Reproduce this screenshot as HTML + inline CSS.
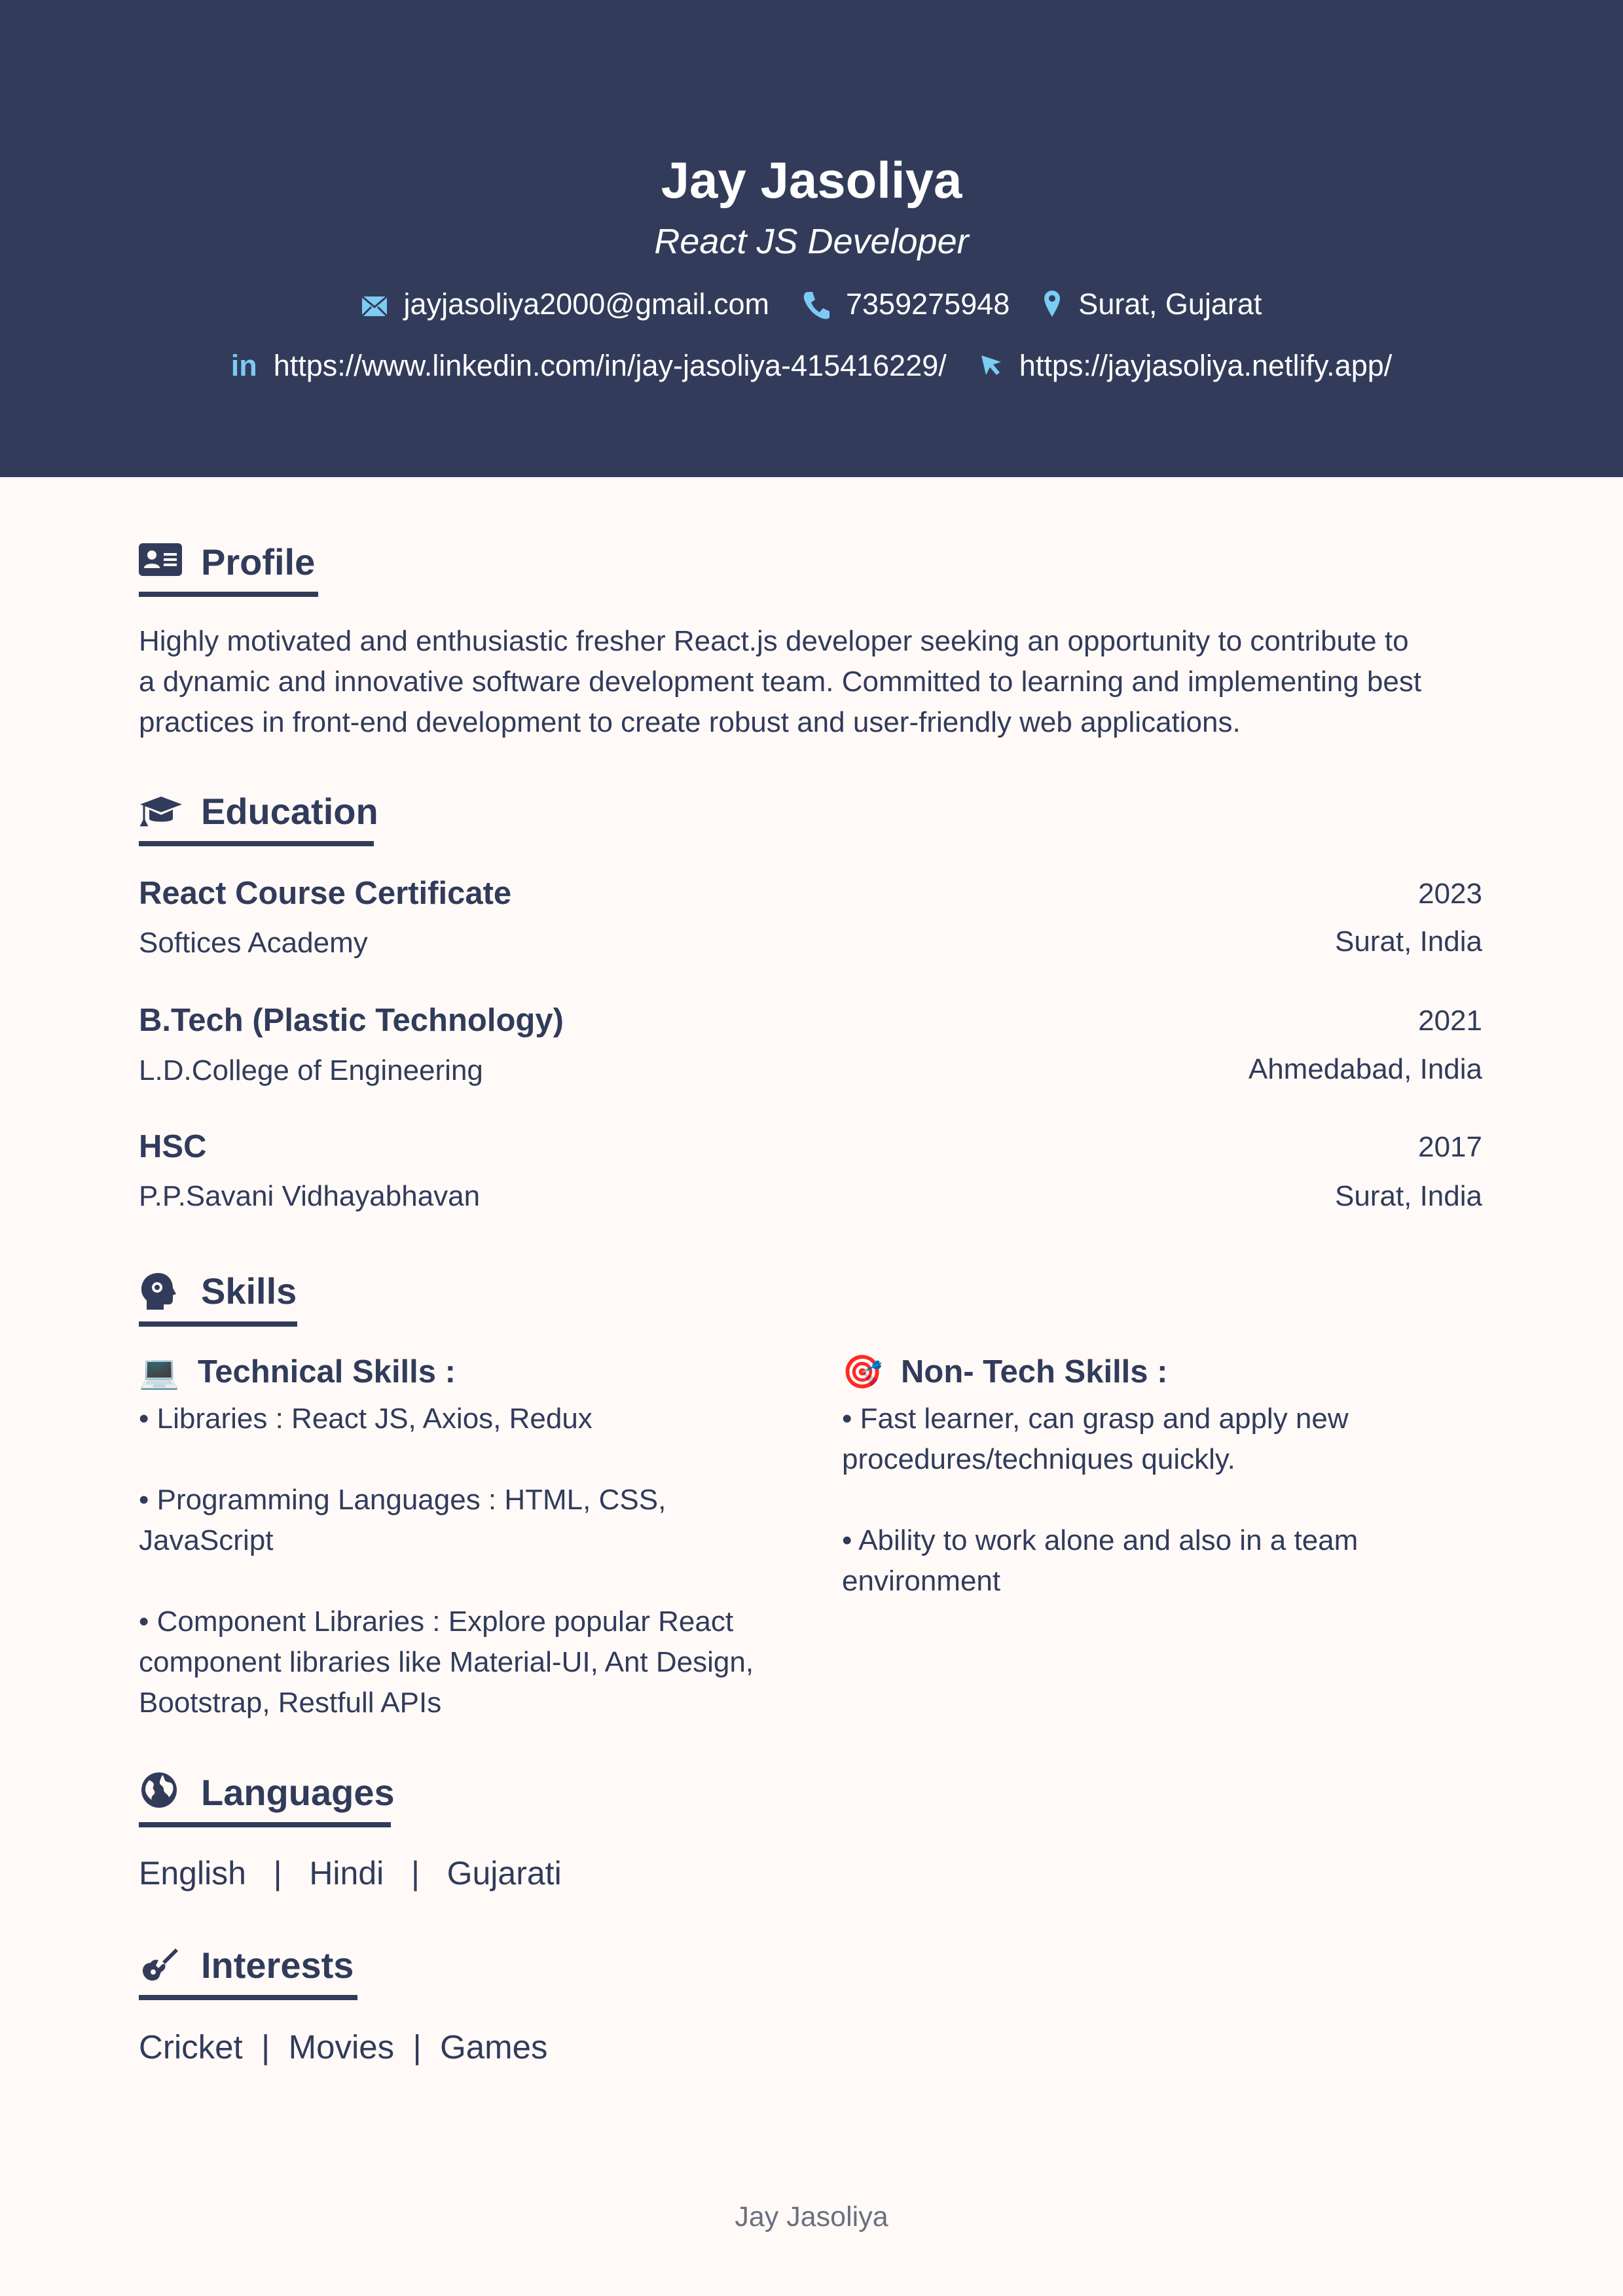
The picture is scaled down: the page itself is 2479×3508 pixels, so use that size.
<!DOCTYPE html>
<html><head><meta charset="utf-8"><style>
*{margin:0;padding:0;box-sizing:border-box}
body{width:2479px;height:3508px;background:#fffaf7;position:relative;font-family:"Liberation Sans",sans-serif;color:#313b5b;overflow:hidden}
.a{position:absolute;white-space:nowrap}
.hdr{position:absolute;left:0;top:0;width:2479px;height:729px;background:#323c5a}
.c{left:0;width:2479px;text-align:center}
.h{font-weight:bold;font-size:56px;line-height:70px}
.ul{position:absolute;height:8px;background:#323c5a;left:212px}
.b{font-size:44px;line-height:62px}
.t{font-weight:bold;font-size:49px;line-height:60px}
.r{right:215px;text-align:right}
.ic{position:absolute}
</style></head><body>
<div class="hdr"></div>
<div class="a c" style="top:230px;font-size:78px;line-height:90px;font-weight:bold;color:#fff">Jay Jasoliya</div>
<div class="a c" style="top:337px;font-size:54px;line-height:64px;font-style:italic;color:#fff">React JS Developer</div>
<div class="a c" style="top:437px;font-size:45px;line-height:56px;color:#fff">
<svg width="40" height="32" viewBox="0 0 40 32" style="vertical-align:-4px"><rect x="1" y="1" width="38" height="30" fill="#7ccbf5"/><path d="M1 1l19 16L39 1M1 31l14-14M39 31L25 17" stroke="#323c5a" stroke-width="3" fill="none"/></svg>&nbsp; jayjasoliya2000@gmail.com&nbsp;&nbsp;&nbsp; <svg width="42" height="44" viewBox="0 0 42 44" style="vertical-align:-8px"><path d="M8 2l8 0 4 12-6 4c3 7 7 12 13 15l5-6 11 5v8c-2 3-6 4-10 3C18 39 6 24 3 12 2 7 4 3 8 2z" fill="#7ccbf5"/></svg>&nbsp; 7359275948&nbsp;&nbsp;&nbsp; <svg width="30" height="44" viewBox="0 0 30 44" style="vertical-align:-6px"><path d="M15 2a12 12 0 0 0-12 12c0 9 12 28 12 28s12-19 12-28A12 12 0 0 0 15 2zm0 7a5 5 0 1 1 0 10 5 5 0 0 1 0-10z" fill="#7ccbf5"/></svg>&nbsp; Surat, Gujarat</div>
<div class="a c" style="top:531px;font-size:45px;line-height:56px;color:#fff">
<b style="color:#7ccbf5">in</b>&nbsp; https://www.linkedin.com/in/jay-jasoliya-415416229/&nbsp;&nbsp;&nbsp; <svg width="36" height="40" viewBox="0 0 36 40" style="vertical-align:-6px"><path d="M3 3l30 10-12 4 10 12-5 4-10-12-6 12z" fill="#7ccbf5"/></svg>&nbsp; https://jayjasoliya.netlify.app/</div>

<svg class="ic" style="left:212px;top:830px" width="66" height="50" viewBox="0 0 66 50"><rect x="0" y="0" width="66" height="50" rx="6" fill="#323c5a"/><circle cx="20" cy="18" r="7" fill="#fffaf7"/><path d="M8 38c0-9 24-9 24 0z" fill="#fffaf7"/><rect x="38" y="15" width="20" height="4" fill="#fffaf7"/><rect x="38" y="23" width="20" height="4" fill="#fffaf7"/><rect x="38" y="31" width="20" height="4" fill="#fffaf7"/></svg>
<div class="a h" style="left:307px;top:824px">Profile</div>
<div class="ul" style="top:904px;width:274px"></div>
<div class="a b" style="left:212px;top:949px">Highly motivated and enthusiastic fresher React.js developer seeking an opportunity to contribute to<br>a dynamic and innovative software development team. Committed to learning and implementing best<br>practices in front-end development to create robust and user-friendly web applications.</div>

<svg class="ic" style="left:212px;top:1215px" width="68" height="50" viewBox="0 0 68 50"><path d="M34 2L66 14 34 26 2 14z" fill="#323c5a"/><path d="M16 22v14c0 6 36 6 36 0V22L34 30z" fill="#323c5a"/><path d="M8 16v22l-4 8h8l-4-8" stroke="#323c5a" stroke-width="3" fill="#323c5a"/></svg>
<div class="a h" style="left:307px;top:1205px">Education</div>
<div class="ul" style="top:1285px;width:359px"></div>

<div class="a t" style="left:212px;top:1335px">React Course Certificate</div>
<div class="a b r" style="top:1335px">2023</div>
<div class="a b" style="left:212px;top:1410px">Softices Academy</div>
<div class="a b r" style="top:1408px">Surat, India</div>
<div class="a t" style="left:212px;top:1529px">B.Tech (Plastic Technology)</div>
<div class="a b r" style="top:1529px">2021</div>
<div class="a b" style="left:212px;top:1605px">L.D.College of Engineering</div>
<div class="a b r" style="top:1603px">Ahmedabad, India</div>
<div class="a t" style="left:212px;top:1722px">HSC</div>
<div class="a b r" style="top:1722px">2017</div>
<div class="a b" style="left:212px;top:1797px">P.P.Savani Vidhayabhavan</div>
<div class="a b r" style="top:1797px">Surat, India</div>

<svg class="ic" style="left:212px;top:1943px" width="60" height="60" viewBox="0 0 60 60"><path d="M30 2C14 2 4 13 4 27c0 8 4 13 8 17v14h26v-8h8c4 0 6-3 6-7v-7l5-2-5-9C52 12 43 2 30 2z" fill="#323c5a"/><circle cx="28" cy="24" r="8" fill="#fffaf7"/><circle cx="28" cy="24" r="4" fill="#323c5a"/></svg>
<div class="a h" style="left:307px;top:1938px">Skills</div>
<div class="ul" style="top:2019px;width:242px"></div>

<div class="a" style="left:212px;top:2068px;font-size:50px;line-height:56px">💻</div>
<div class="a t" style="left:302px;top:2066px">Technical Skills :</div>
<div class="a b" style="left:212px;top:2137px">• Libraries : React JS, Axios, Redux<br><br>• Programming Languages : HTML, CSS,<br>JavaScript<br><br>• Component Libraries : Explore popular React<br>component libraries like Material-UI, Ant Design,<br>Bootstrap, Restfull APIs</div>

<div class="a" style="left:1286px;top:2068px;font-size:50px;line-height:56px">🎯</div>
<div class="a t" style="left:1376px;top:2066px">Non- Tech Skills :</div>
<div class="a b" style="left:1286px;top:2137px">• Fast learner, can grasp and apply new<br>procedures/techniques quickly.<br><br>• Ability to work alone and also in a team<br>environment</div>

<svg class="ic" style="left:214px;top:2706px" width="58" height="58" viewBox="0 0 58 58"><circle cx="29" cy="29" r="27" fill="#323c5a"/><path d="M14 14c6 2 8 6 6 10s4 6 2 10-6 4-4 10c-6-4-10-10-10-16 0-5 2-10 6-14zM34 6c4 4 2 8 6 10s8 0 10 6c2 8-2 14-6 18-2-6-8-6-8-12s-6-6-6-10 2-8 4-12z" fill="#fffaf7"/></svg>
<div class="a h" style="left:307px;top:2704px">Languages</div>
<div class="ul" style="top:2784px;width:385px"></div>
<div class="a" style="left:212px;top:2831px;font-size:50px;line-height:62px">English &nbsp; | &nbsp; Hindi &nbsp; | &nbsp; Gujarati</div>

<svg class="ic" style="left:214px;top:2973px" width="60" height="60" viewBox="0 0 60 60"><path d="M54 4l4 4-20 20-4-4z" fill="#323c5a"/><path d="M28 22c-4-2-10 0-12 4-6 0-12 4-12 12 0 10 10 18 20 14 6-2 6-8 8-12 4-2 8-6 6-12l-4 0-6 6-4-4z" fill="#323c5a"/><circle cx="20" cy="40" r="4" fill="#fffaf7"/></svg>
<div class="a h" style="left:307px;top:2968px">Interests</div>
<div class="ul" style="top:3048px;width:334px"></div>
<div class="a" style="left:212px;top:3097px;font-size:51px;line-height:62px">Cricket &nbsp;| &nbsp;Movies &nbsp;| &nbsp;Games</div>

<div class="a c" style="top:3360px;font-size:43px;line-height:54px;color:#6b7080">Jay Jasoliya</div>
</body></html>
